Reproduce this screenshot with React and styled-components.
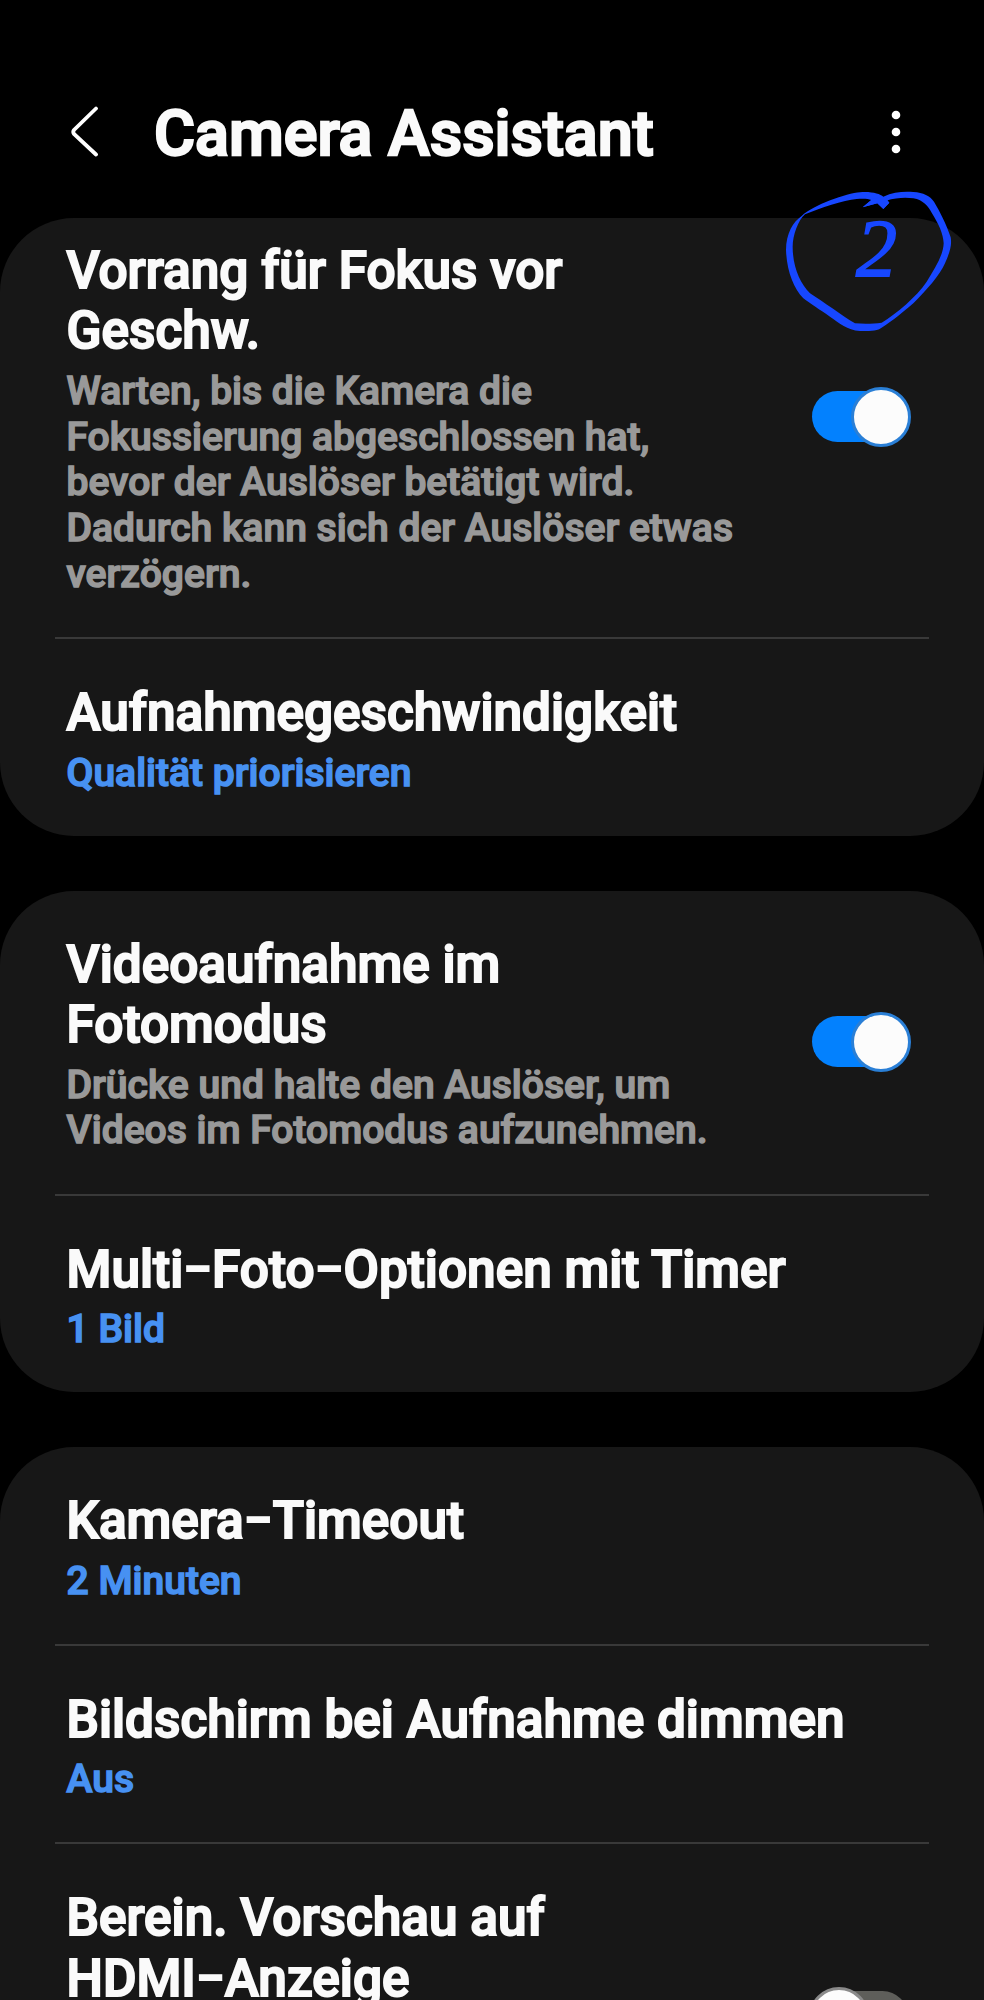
import React from 'react';
import styled, { createGlobalStyle } from 'styled-components';

const GlobalStyle = createGlobalStyle`
  * {
    box-sizing: border-box;
  }

  body {
    margin: 0;
    background: #000;
    font-family: Roboto, sans-serif;
    overflow: hidden;
  }
`;

const Screen = styled.div`
  position: relative;
  width: 984px;
  height: 2000px;
  overflow: hidden;
  background: #000;
`;

const Header = styled.header`
  display: flex;
  align-items: center;
  height: 218px;
  padding: 45px 83.5px 0 70px;
`;

const IconButton = styled.button`
  display: flex;
  padding: 0;
  border: 0;
  background: none;
  color: #fff;
`;

const PageTitle = styled.h1`
  flex: 1;
  margin: 4px 0 0 54px;
  color: #fafafa;
  font-size: 62.9px;
  font-weight: 500;
  line-height: 74px;
  -webkit-text-stroke: 0.038em;
`;

const Sections = styled.main`
  display: flex;
  flex-direction: column;
  gap: 55px;
`;

const Card = styled.section`
  border-radius: 74px;
  background: #171717;
`;

const Row = styled.div`
  display: flex;
  align-items: center;
  justify-content: space-between;
  padding: ${({ $clipped }) => ($clipped ? '23px' : '44px')} 73.5px 39.4px 66.5px;
`;

const Divider = styled.hr`
  height: 2px;
  margin: 0 55px;
  border: 0;
  background: #393939;
`;

const RowText = styled.div`
  width: ${({ $wide }) => ($wide ? '800px' : '680px')};
  min-height: ${({ $tall }) => ($tall ? '262px' : '0')};
`;

const RowTitle = styled.h2`
  margin: 0 0 7px;
  color: #fafafa;
  font-size: 51.35px;
  font-weight: 500;
  line-height: 60.4px;
  -webkit-text-stroke: 0.038em;
`;

const RowNote = styled.p`
  margin: 0;
  color: ${({ $accent }) => ($accent ? '#4791f2' : '#999')};
  font-size: 39.05px;
  font-weight: 500;
  line-height: 45.8px;
  -webkit-text-stroke: 0.038em;
`;

const Track = styled.div`
  display: flex;
  align-items: center;
  justify-content: ${({ $on }) => ($on ? 'flex-end' : 'flex-start')};
  width: 96px;
  height: 51px;
  margin: 0 3px 5px;
  border-radius: 26px;
  background: ${({ $on }) => ($on ? '#0381fe' : '#5e5e5a')};
`;

const Thumb = styled.span`
  flex: none;
  width: 60px;
  height: 60px;
  margin: 0 -3px;
  border: 3px solid ${({ $on }) => ($on ? '#2a7fd6' : '#8a8a8a')};
  border-radius: 50%;
  background: #fcfcfc;
`;

const Annotation = styled.svg`
  position: absolute;
  top: 180px;
  left: 780px;
  fill: #1747ff;
`;

const AnnotationNumber = styled.text`
  font-family: 'Liberation Serif', serif;
  font-size: 246px;
  font-style: italic;
  stroke: #1747ff;
  stroke-width: 5px;
`;

const BackIcon = () => (
  <svg width="30" height="52" viewBox="0 0 30 52" fill="none" stroke="#fff" strokeWidth="3.8" strokeLinecap="round">
    <path d="M26 2.5 L4 24 Q2.5 26 4 28 L26 48.5" />
  </svg>
);

const MoreIcon = () => (
  <svg width="10" height="44" viewBox="0 0 10 44" fill="#fff">
    <circle cx="5" cy="5" r="4.3" />
    <circle cx="5" cy="22" r="4.3" />
    <circle cx="5" cy="39" r="4.3" />
  </svg>
);

// Pen-drawn ring around the step number, thick and thin like a calligraphy nib
const StepMark = () => (
  <Annotation width="180" height="160" viewBox="0 0 540 480">
    <path
      fillRule="evenodd"
      d="M65 108 C100 75 200 40 240 37 C275 34 300 42 310 50 C340 36 370 34 400 36 C430 38 450 48 462 65
        C480 95 500 135 512 172 C516 195 510 215 495 250 C480 285 440 330 400 370 C360 405 320 435 300 446
        C290 453 265 453 240 453 C200 450 180 430 150 410 C120 390 90 370 70 355 C40 325 20 270 18 210
        C18 160 40 125 65 108 Z
        M75 103 C120 85 190 60 230 57 C250 55 264 56 274 60 L248 82 L292 70 L310 87 L328 68 L318 62
        C350 52 380 52 400 55 C430 60 445 80 455 98 C475 130 490 160 491 190 C490 225 465 265 440 305
        C410 350 350 400 305 428 C280 432 250 432 225 430 C190 410 130 365 90 340 C60 310 38 260 38 200
        C38 165 55 120 75 103 Z"
    />
    <path d="M248 82 L278 56 L316 50 L328 68 L310 87 L292 70 Z" />
    <AnnotationNumber x="228" y="287">2</AnnotationNumber>
  </Annotation>
);

const Switch = ({ on }) => (
  <Track $on={on} role="switch" aria-checked={on}>
    <Thumb $on={on} />
  </Track>
);

const Setting = ({
  title,
  note,
  accent,
  on,
  clipped,
  tall,
}) => (
  <Row $clipped={clipped}>
    <RowText $wide={on === undefined} $tall={tall}>
      <RowTitle>{title}</RowTitle>
      {note && <RowNote $accent={accent}>{note}</RowNote>}
    </RowText>
    {on !== undefined && <Switch on={on} />}
  </Row>
);

const sections = [
  [
    {
      title: 'Vorrang für Fokus vor Geschw.',
      note: 'Warten, bis die Kamera die Fokussierung abgeschlossen hat, bevor der Auslöser betätigt wird. Dadurch kann sich der Auslöser etwas verzögern.',
      on: true,
      clipped: true,
    },
    { title: 'Aufnahmegeschwindigkeit', note: 'Qualität priorisieren', accent: true },
  ],
  [
    {
      title: 'Videoaufnahme im Fotomodus',
      note: 'Drücke und halte den Auslöser, um Videos im Fotomodus aufzunehmen.',
      on: true,
    },
    { title: 'Multi−Foto−Optionen mit Timer', note: '1 Bild', accent: true },
  ],
  [
    { title: 'Kamera−Timeout', note: '2 Minuten', accent: true },
    { title: 'Bildschirm bei Aufnahme dimmen', note: 'Aus', accent: true },
    { title: 'Berein. Vorschau auf HDMI−Anzeige', on: false, tall: true },
  ],
];

const App = () => (
  <Screen>
    <GlobalStyle />
    <Header>
      <IconButton aria-label="Zurück"><BackIcon /></IconButton>
      <PageTitle>Camera Assistant</PageTitle>
      <IconButton aria-label="Mehr"><MoreIcon /></IconButton>
    </Header>

    <Sections>
      {sections.map((rows) => (
        <Card key={rows[0].title}>
          {rows.map((row, i) => (
            <React.Fragment key={row.title}>
              {i > 0 && <Divider />}
              <Setting {...row} />
            </React.Fragment>
          ))}
        </Card>
      ))}
    </Sections>

    <StepMark />
  </Screen>
);

export default App;
